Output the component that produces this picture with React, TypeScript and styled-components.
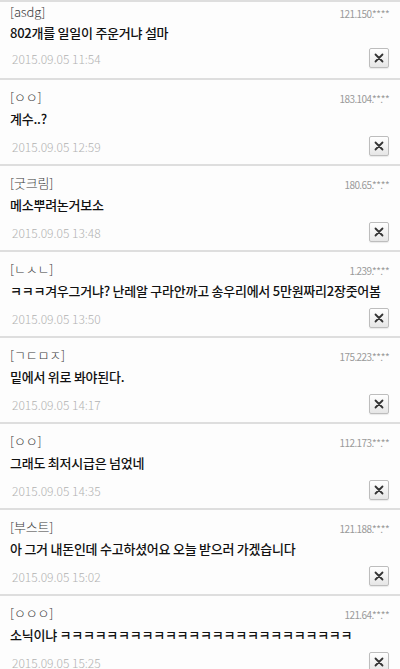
import React from "react";
import styled, { createGlobalStyle } from "styled-components";

const GlobalStyle = createGlobalStyle`
  html, body {
    margin: 0;
    padding: 0;
    background: #fdfdfd;
  }
  body {
    font-family: "Noto Sans CJK KR", "Noto Sans", sans-serif;
  }
`;

const List = styled.div`
  width: 400px;
  height: 669px;
  overflow: hidden;
  background: #fdfdfd;
`;

const Row = styled.div<{ $compact?: boolean }>`
  border-top: 2px solid #dedede;
  padding: ${(p) => (p.$compact ? "1px 11px 10px 10px" : "8px 11px 8px 10px")};
  display: flex;
  flex-direction: column;
`;

const Head = styled.div`
  display: flex;
  justify-content: space-between;
  align-items: center;
  height: 18px;
`;

const Name = styled.span`
  font-size: 13px;
  line-height: 18px;
  color: #3c3c3c;
  font-weight: 300;
  letter-spacing: -0.2px;
`;

const Ip = styled.span`
  font-size: 10px;
  line-height: 12px;
  color: #9a9a9a;
  letter-spacing: -0.6px;
  padding-top: 3px;
`;

const Text = styled.div<{ $compact?: boolean }>`
  margin-top: ${(p) => (p.$compact ? "3px" : "4px")};
  font-size: 13px;
  line-height: 18px;
  color: #111;
  font-weight: 500;
  letter-spacing: -0.25px;
  white-space: nowrap;
`;

const Foot = styled.div<{ $compact?: boolean }>`
  margin-top: ${(p) => (p.$compact ? "6px" : "8px")};
  display: flex;
  justify-content: space-between;
  align-items: center;
  height: 20px;
`;

const Date = styled.span`
  font-size: 12px;
  color: #b2b2b2;
  font-weight: 300;
  padding-left: 2px;
`;

const DelButton = styled.button`
  width: 20px;
  height: 20px;
  padding: 0;
  border: 1px solid #bdbdbd;
  border-radius: 2px;
  background: linear-gradient(#ffffff, #e6e6e6);
  display: flex;
  align-items: center;
  justify-content: center;
  box-shadow: 0 1px 1px rgba(0, 0, 0, 0.08);
`;

const comments = [
  { name: "[asdg]", ip: "121.150.**.**", text: "802개를 일일이 주운거냐 설마", time: "11:54" },
  { name: "[ㅇㅇ]", ip: "183.104.**.**", text: "계수..?", time: "12:59" },
  { name: "[굿크림]", ip: "180.65.**.**", text: "메소뿌려논거보소", time: "13:48" },
  {
    name: "[ㄴㅅㄴ]",
    ip: "1.239.**.**",
    text: "ㅋㅋㅋ겨우그거냐? 난레알 구라안까고 송우리에서 5만원짜리2장줏어봄",
    time: "13:50",
  },
  { name: "[ㄱㄷㅁㅈ]", ip: "175.223.**.**", text: "밑에서 위로 봐야된다.", time: "14:17" },
  { name: "[ㅇㅇ]", ip: "112.173.**.**", text: "그래도 최저시급은 넘었네", time: "14:35" },
  {
    name: "[부스트]",
    ip: "121.188.**.**",
    text: "아 그거 내돈인데 수고하셨어요 오늘 받으러 가겠습니다",
    time: "15:02",
  },
  {
    name: "[ㅇㅇㅇ]",
    ip: "121.64.**.**",
    text: "소닉이냐 ㅋㅋㅋㅋㅋㅋㅋㅋㅋㅋㅋㅋㅋㅋㅋㅋㅋㅋㅋㅋㅋㅋㅋㅋㅋ",
    time: "15:25",
  },
];

const CloseIcon = () => (
  <svg width="10" height="10" viewBox="0 0 10 10">
    <path d="M1.5 1.5 L8.5 8.5 M8.5 1.5 L1.5 8.5" stroke="#333" strokeWidth="1.8" strokeLinecap="round" />
  </svg>
);

export default function App() {
  return (
    <List>
      <GlobalStyle />
      {comments.map((c, i) => (
        <Row key={i} $compact={i === 0}>
          <Head>
            <Name>{c.name}</Name>
            <Ip>{c.ip}</Ip>
          </Head>
          <Text $compact={i === 0}>{c.text}</Text>
          <Foot $compact={i === 0}>
            <Date>2015.09.05 {c.time}</Date>
            <DelButton>
              <CloseIcon />
            </DelButton>
          </Foot>
        </Row>
      ))}
    </List>
  );
}
